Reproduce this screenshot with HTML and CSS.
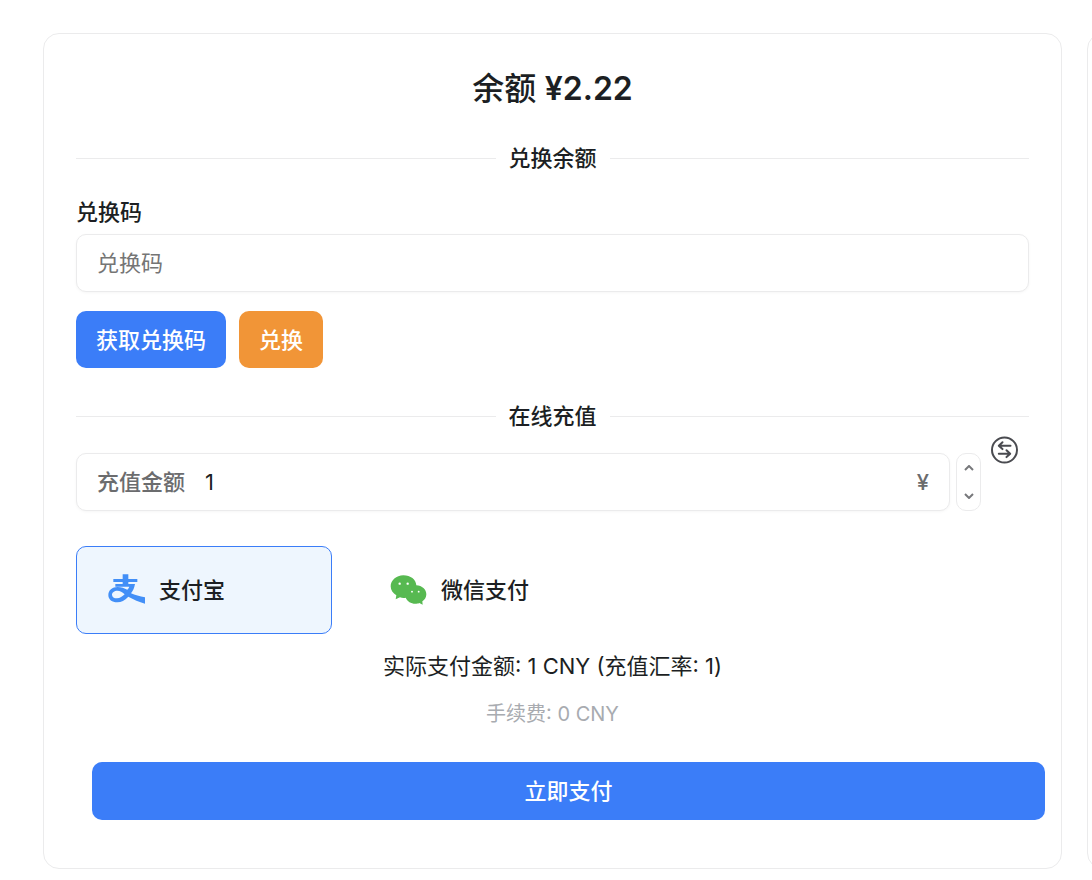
FILE: index.html
```html
<!DOCTYPE html>
<html lang="zh-CN">
<head>
<meta charset="utf-8">
<meta name="viewport" content="width=device-width, initial-scale=1">
<title>余额</title>
<link rel="stylesheet" href="styles.css">
</head>
<body>
<main class="page">
  <section class="card">
    <h1 class="balance">余额 <span class="balance-value">¥2.22</span></h1>

    <h2 class="divider">兑换余额</h2>
    <form class="redeem">
      <label class="redeem-label" for="code">兑换码</label>
      <input class="field" id="code" type="text" placeholder="兑换码">
      <div class="actions">
        <button class="btn btn-primary" type="button">获取兑换码</button>
        <button class="btn btn-warning" type="button">兑换</button>
      </div>
    </form>

    <h2 class="divider divider-topup">在线充值</h2>
    <form>
      <div class="amount-row">
        <div class="field amount">
          <label class="amount-label" for="amount">充值金额</label>
          <input class="amount-input" id="amount" type="text" inputmode="numeric" value="1">
          <span class="amount-unit">¥</span>
        </div>
        <div class="stepper">
          <button class="step" type="button" aria-label="增加"><svg width="10" height="6" viewBox="0 0 10 6"><path d="M1 5 5 1l4 4"/></svg></button>
          <button class="step" type="button" aria-label="减少"><svg width="10" height="6" viewBox="0 0 10 6"><path d="m1 1 4 4 4-4"/></svg></button>
        </div>
        <button class="swap" type="button" aria-label="切换">
          <svg width="28" height="28" viewBox="0 0 28 28">
            <circle cx="13.500" cy="14" r="12.500"/>
            <path d="M19.500 9.700H8.500M11.500 6.300 7.800 9.700 11.500 13.100M7.800 17.700H18.800M15.500 14.300l3.700 3.400-3.700 3.400"/>
          </svg>
        </button>
      </div>

      <div class="methods">
        <label class="method">
          <input class="method-radio" type="radio" name="method" checked>
          <svg width="37" height="32" viewBox="114 116 111 96">
            <path fill="#428ff7" d="M158 117h17v14h27v9h-27v6h20c-2 12-6 20-12 28 12 5 26 9 42 12v19c-18-5-34-13-50-21-11 12-21 17-33 17-16 0-27-8-27-22 0-15 12-24 28-24 11 0 20 4 29 8 3-3 5-6 6-9h-42v-8h22v-6h-28v-9h28zM142 166c-9 0-16 5-16 12s6 11 15 11c9 0 16-5 23-12-8-7-13-11-22-11z"/>
          </svg>
          <span>支付宝</span>
        </label>
        <label class="method">
          <input class="method-radio" type="radio" name="method">
          <svg width="37" height="30" viewBox="30 43 111 90">
            <path fill="#57b951" d="M70 44c22 0 38 13 39 30 17 1 30 12 30 27 0 9-5 17-12 21l1 10-10-5c-4 2-8 2-12 2-13 0-24-7-29-18-5 1-11 1-17-1l-13 6 2-12c-10-6-17-15-17-27 0-18 17-33 38-33z"/>
            <g fill="#fff"><circle cx="59" cy="69" r="3.500"/><circle cx="83" cy="69" r="3.500"/><circle cx="96" cy="93" r="2.800"/><circle cx="116" cy="93" r="2.800"/></g>
          </svg>
          <span>微信支付</span>
        </label>
      </div>

      <p class="total">实际支付金额: 1 CNY (充值汇率: 1)</p>
      <p class="fee">手续费: 0 CNY</p>
      <button class="btn btn-primary pay" type="button">立即支付</button>
    </form>
  </section>
  <aside class="card card-next"></aside>
</main>
</body>
</html>
```
FILE: styles.css
```css
* { box-sizing: border-box; }

body {
  margin: 0;
  background: #fff;
  color: #1c1f23;
  font-family: Inter, "Noto Sans CJK SC", sans-serif;
  font-size: 22px;
  line-height: 32px;
}

button, input { font: inherit; color: inherit; }

.page {
  display: grid;
  grid-template-columns: minmax(0, 1fr) 5px;
  gap: 25px;
  padding: 33px 0 11px 43px;
  overflow: hidden;
}

.card {
  padding: 32px 32px 48px;
  border: 1px solid #ebebec;
  border-radius: 16px;
}

.card-next { width: 320px; }

.balance {
  margin: 0;
  font-size: 32px;
  font-weight: 500;
  line-height: 46px;
  text-align: center;
}

.balance-value { font-weight: 600; }

.divider {
  display: flex;
  align-items: center;
  gap: 13px;
  margin: 34px 0 28px;
  font-size: 22px;
  font-weight: 500;
  line-height: 24px;
}

.divider::before, .divider::after {
  content: "";
  flex: 1;
  height: 1px;
  background: #ebebec;
}

.divider-topup { margin: 36px 0 25px; }

.redeem-label {
  display: block;
  margin-bottom: 8px;
  font-weight: 500;
  line-height: 28px;
}

.field {
  display: block;
  width: 100%;
  height: 58px;
  padding: 0 20px;
  border: 1px solid #ebebec;
  border-radius: 10px;
  background: #fff;
  box-shadow: 0 1px 3px rgba(0, 0, 0, .04);
}

.field::placeholder { color: #757575; opacity: 1; }

.actions { display: flex; gap: 13px; margin-top: 19px; }

.btn {
  height: 57px;
  padding: 0 20px;
  border: 0;
  border-radius: 10px;
  color: #fff;
  font-weight: 500;
}

.btn-primary { background: #3b7df8; }
.btn-warning { background: #f19537; }

.amount-row { display: flex; align-items: flex-start; }

.amount {
  display: flex;
  align-items: center;
  flex: 1;
  min-width: 0;
}

.amount-label { color: #6b6c6e; font-weight: 500; }

.amount-input {
  flex: 1;
  min-width: 0;
  margin-left: 20px;
  padding: 0;
  border: 0;
  background: none;
}

.amount-unit { color: #6b6c6e; font-weight: 500; }

.stepper {
  display: flex;
  flex-direction: column;
  width: 25px;
  height: 58px;
  margin-left: 6px;
  border: 1px solid #ebebec;
  border-radius: 10px;
}

.step {
  display: flex;
  flex: 1;
  align-items: center;
  justify-content: center;
  padding: 0;
  border: 0;
  background: none;
}

.step svg { fill: none; stroke: #77787b; stroke-width: 2; }

.swap {
  display: flex;
  justify-content: center;
  width: 48px;
  height: 28px;
  margin-top: -17px;
  padding: 0;
  border: 0;
  background: none;
}

.swap svg { fill: none; stroke: #4a4b50; stroke-width: 2; stroke-linecap: round; stroke-linejoin: round; }

.methods { display: flex; gap: 26px; margin-top: 35px; }

.method {
  display: flex;
  align-items: center;
  gap: 14px;
  width: 256px;
  height: 88px;
  padding: 0 31px;
  border: 1px solid transparent;
  border-radius: 10px;
  font-weight: 500;
}

.method:has(:checked) { border-color: #3b7df8; background: #eef6fe; }

.method-radio { position: absolute; opacity: 0; pointer-events: none; }

.total { margin: 16px 0; text-align: center; }

.fee { margin: 0; color: #a8abb0; font-size: 20px; text-align: center; }

.pay { display: block; width: 100%; height: 58px; margin: 32px 0 0 16px; }
```
